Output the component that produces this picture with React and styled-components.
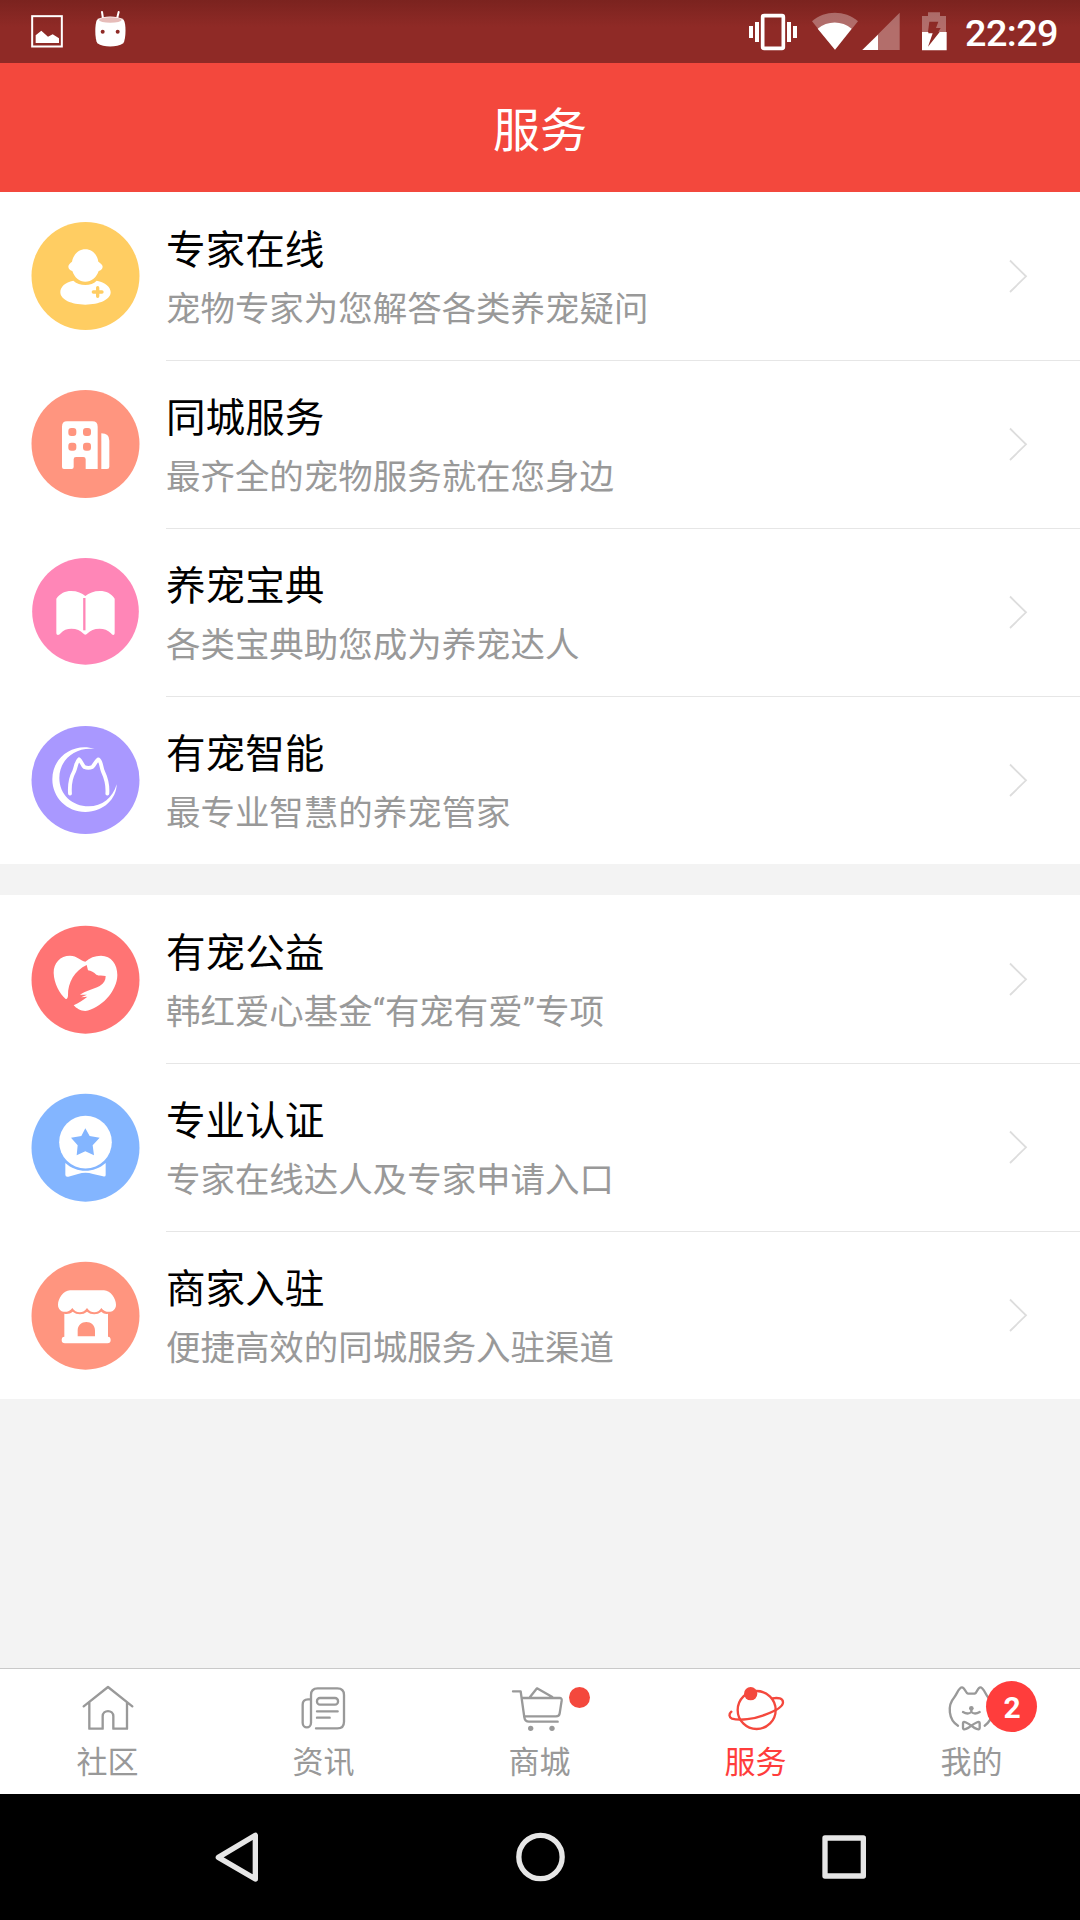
import styled, { createGlobalStyle, css } from "styled-components";

// Styled Components
const GlobalStyle = createGlobalStyle`
  * {
    box-sizing: border-box;
  }
  body {
    margin: 0;
    background: #f3f3f3;
    font-family: Roboto, "Noto Sans CJK SC", sans-serif;
  }
  svg {
    display: block;
    flex-shrink: 0;
  }
`;

const Screen = styled.div`
  display: flex;
  flex-direction: column;
  width: 1080px;
  height: 1920px;
  overflow: hidden;
  background: #f3f3f3;
`;

const StatusBar = styled.div`
  display: flex;
  justify-content: space-between;
  height: 63px;
  padding-left: 31px;
  background: linear-gradient(#7b231f 0, #8f2a26 27px);
  color: #fff;
`;

const StatusGroup = styled.div`
  display: flex;
  width: ${(props) => props.$width || "auto"};
`;

const StatusIcon = styled.svg`
  height: 63px;
  width: ${(props) => props.$width}px;
  margin-left: ${(props) => props.$gap || 0}px;
`;

const Clock = styled.span`
  margin-left: 17px;
  font-size: 37.8px;
  font-weight: 500;
  letter-spacing: -0.6px;
  line-height: 66px;
`;

const Header = styled.header`
  display: flex;
  align-items: center;
  justify-content: center;
  height: 129px;
  padding-top: 6px;
  background: #f3483d;
`;

const HeaderTitle = styled.h1`
  margin: 0;
  color: #fff;
  font-size: 47px;
  font-weight: 400;
  line-height: 60px;
`;

const List = styled.ul`
  list-style: none;
  margin: 0 0 31px;
  padding: 0;
  background: #fff;
`;

const Row = styled.li`
  display: flex;
  align-items: center;
  height: 168px;
  padding-left: 31px;
`;

const RowIcon = styled.svg`
  width: 109px;
  height: 108px;
  overflow: visible;
`;

const RowBody = styled.div`
  display: flex;
  align-items: center;
  justify-content: space-between;
  flex: 1;
  height: 168px;
  margin-left: 26px;
  padding-right: 52px;
  border-top: 1px solid #e6e6e6;
  ${Row}:first-child & {
    border-top-color: transparent;
  }
`;

const RowInfo = styled.div`
  padding-top: 7px;
`;

const RowTitle = styled.div`
  color: #000;
  font-size: 39.6px;
  line-height: 58px;
`;

const RowText = styled.div`
  color: #999;
  font-size: 34.46px;
  line-height: 59px;
`;

const Arrow = styled.svg`
  width: 20px;
  height: 36px;
  fill: none;
  stroke: #ddd;
  stroke-width: 1.8;
`;

const TabBar = styled.nav`
  display: flex;
  height: 126px;
  margin-top: auto;
  border-top: 1px solid #c9c9c9;
  background: #fff;
`;

const Tab = styled.div`
  position: relative;
  display: flex;
  flex-direction: column;
  align-items: center;
  flex: 1;
  padding-top: 14px;
  color: ${(props) => (props.$active ? "#f4483d" : "#999")};
`;

const TabIcon = styled.svg`
  width: 60px;
  height: 51px;
  fill: none;
  stroke: currentColor;
  stroke-width: 7;
  stroke-linecap: round;
  stroke-linejoin: round;
`;

const TabLabel = styled.span`
  margin-top: 6px;
  padding-right: 1px;
  color: ${(props) => (props.$active ? "#ff3d3c" : "#999")};
  font-size: 31px;
  line-height: 46px;
`;

const Badge = styled.span`
  position: absolute;
  border-radius: 50%;
  ${(props) =>
    props.$dot
      ? css`
          top: 18px;
          left: 137px;
          width: 21px;
          height: 21px;
          background: #f4483d;
        `
      : css`
          top: 12px;
          left: 122px;
          width: 51px;
          height: 51px;
          background: #ff3d3c;
          color: #fff;
          font-size: 30px;
          font-weight: 700;
          line-height: 53px;
          text-align: center;
          text-indent: 1px;
        `}
`;

const NavBar = styled.div`
  display: flex;
  align-items: center;
  justify-content: center;
  gap: 243px;
  height: 126px;
  background: #000;
`;

const NavButton = styled.svg`
  width: 60px;
  height: 60px;
  fill: none;
  stroke: #e6e6e6;
  stroke-width: 16;
  stroke-linejoin: round;
`;

const services = [
  {
    title: "专家在线",
    text: "宠物专家为您解答各类养宠疑问",
    color: "#ffcd62",
    cy: 258,
    icon: (
      <>
        <path d="M256 178C276 178 292 193 295 215C300 218 308 224 308 230C308 236 302 241 296 243C290 262 274 275 256 275C238 275 223 262 217 243C211 241 205 236 205 230C205 224 211 218 216 215C220 193 236 178 256 178Z" />
        <path d="M220 272C230 281 242 285 256 285C270 285 281 281 290 272C316 277 332 291 332 307C332 329 298 344 256 344C214 344 181 329 181 307C181 290 195 277 220 272Z" />
        <path d="M293 293V319M280 306H306" stroke="#ffcd62" strokeWidth="10" strokeLinecap="round" />
      </>
    ),
  },
  {
    title: "同城服务",
    text: "最齐全的宠物服务就在您身边",
    color: "#ff957f",
    cy: 762,
    icon: (
      <>
        <path d="M201 694H277Q293 694 293 710V837H257V808Q257 801 250 801H228Q221 801 221 808V831Q221 837 215 837H192Q186 837 186 831V710Q186 694 201 694Z" />
        <path d="M304 730Q328 730 328 752V830Q328 837 321 837H304Z" />
        <g fill="#ff957f">
          <rect x="205" y="714" width="24" height="24" rx="9" />
          <rect x="249" y="714" width="24" height="24" rx="9" />
          <rect x="205" y="758" width="24" height="24" rx="9" />
          <rect x="249" y="758" width="24" height="24" rx="9" />
        </g>
      </>
    ),
  },
  {
    title: "养宠宝典",
    text: "各类宝典助您成为养宠达人",
    color: "#ff86b7",
    cy: 244,
    shift: 2,
    r: 160,
    icon: (
      <>
        <path d="M169 206C180 190 196 183 213 183C232 183 246 189 256 198C267 189 281 183 300 183C318 183 334 190 344 206V308C344 316 338 317 333 310C323 300 312 296 299 296C282 296 271 301 263 310Q256 318 249 310C242 301 230 296 214 296C201 296 190 300 182 310C176 317 169 316 169 308Z" />
        <path d="M253 204V301" stroke="#ff86b7" strokeWidth="7" />
      </>
    ),
  },
  {
    title: "有宠智能",
    text: "最专业智慧的养宠管家",
    color: "#a998ff",
    cy: 750,
    icon: (
      <>
        <path d="M284 657C228 636 157 676 157 748C157 803 201 846 256 846C312 846 350 805 350 763C338 805 306 829 266 829C217 829 178 794 178 744C178 690 224 650 284 657Z" />
        <path
          d="M210 791C208 764 212 743 222 725C228 712 228 696 237 688C244 693 246 705 253 711Q265 716 277 711C283 705 287 694 295 688C304 694 303 711 309 725C318 744 324 764 322 791"
          fill="none"
          stroke="#fff"
          strokeWidth="11.500"
          strokeLinecap="round"
          strokeLinejoin="round"
        />
      </>
    ),
  },
];

const partners = [
  {
    title: "有宠公益",
    text: "韩红爱心基金“有宠有爱”专项",
    color: "#ff7474",
    cy: 269,
    shift: -2,
    icon: (
      <path d="M256 215C269 203 284 197 303 197C334 197 352 223 352 255C352 305 300 357 256 363C242 363 229 355 221 346C236 338 249 331 262 320L243 322L261 314L240 314C255 303 279 298 299 288C311 281 317 272 317 258C307 256 297 258 289 254C282 247 273 242 264 241L260 225C225 241 203 277 204 317Q203 327 197 327C179 311 162 281 161 249C160 219 181 197 210 197C231 197 242 213 256 215Z" />
    ),
  },
  {
    title: "专业认证",
    text: "专家在线达人及专家申请入口",
    color: "#83b5ff",
    cy: 773,
    shift: -2,
    icon: (
      <>
        <path d="M196 819C230 850 282 850 317 819V855Q317 861 309 859L279 852C264 847 249 847 234 852L205 860Q196 862 196 854Z" />
        <circle cx="256.500" cy="756.500" r="79" />
        <path
          d="M256 715L269 738L299 743L278 766L282 796L256 784L230 796L233 766L213 743L244 738Z"
          fill="#83b5ff"
        />
      </>
    ),
  },
  {
    title: "商家入驻",
    text: "便捷高效的同城服务入驻渠道",
    color: "#ff957f",
    cy: 287,
    shift: -2,
    icon: (
      <>
        <path d="M210 211H312C332 211 348 237 348 254C348 278 318 283 304 264C295 281 271 281 261 264C251 281 227 281 217 264C203 283 174 278 174 254C174 237 190 211 210 211Z" />
        <path d="M193 281C202 283 211 281 218 275C231 285 249 285 261 275C273 285 292 285 304 275C311 281 317 283 324 281V350Q332 350 332 360Q332 370 322 370H195Q185 370 185 360Q185 350 193 350ZM233 349H285V332C285 316 273 306 259 306C245 306 233 316 233 332Z" fillRule="evenodd" />
      </>
    ),
  },
];

const tabs = [
  {
    label: "社区",
    x: 234,
    icon: (
      <path d="M251 169L324 111L397 169M268 157V236H308V199C308 178 340 178 340 199V236H381V157" />
    ),
  },
  {
    label: "资讯",
    x: 882,
    icon: (
      <>
        <path d="M948 235H1012Q1032 235 1032 215V135Q1032 115 1012 115H953Q933 115 933 135V218C933 237 908 237 908 218V164Q908 148 924 148H930" />
        <rect x="951" y="144" width="63" height="20" rx="9" />
        <path d="M951 184H1013M951 203H989" />
      </>
    ),
  },
  {
    label: "商城",
    x: 330,
    dot: true,
    icon: (
      <>
        <path d="M339 124H362L373 202Q375 215 387 215H473M366 144H479Q486 144 485 152L479 190Q478 199 468 199H374M390 141L411 115L457 141" />
        <circle cx="392" cy="235" r="8" fill="currentColor" stroke="none" />
        <circle cx="456" cy="235" r="8" fill="currentColor" stroke="none" />
      </>
    ),
  },
  {
    label: "服务",
    x: 978,
    active: true,
    icon: (
      <>
        <circle cx="1070" cy="180" r="57" />
        <circle cx="1052" cy="131" r="20" fill="currentColor" stroke="none" />
        <path d="M994 185C986 192 987 202 996 206C1019 213 1062 207 1096 194C1124 184 1149 171 1149 157C1149 145 1135 142 1117 145" />
      </>
    ),
  },
  {
    label: "我的",
    x: 486,
    count: 2,
    icon: (
      <>
        <path d="M534 227C505 209 502 166 522 143C532 131 536 112 546 112C555 112 556 130 564 131H584C592 129 592 112 601 112C611 112 615 132 625 143C644 166 642 208 614 227" />
        <path d="M549 186Q564 195 574 186Q584 195 599 186M574 178V186" />
        <circle cx="574" cy="175" r="7" fill="currentColor" stroke="none" />
        <path d="M549 219C549 211 565 220 574 227C583 220 599 211 599 219V234C599 243 583 235 574 227C565 235 549 243 549 234Z" />
      </>
    ),
  },
];

function ServiceRow({ item }) {
  const top = item.cy + (item.shift || 0) - 162;

  return (
    <Row>
      <RowIcon viewBox={`93 ${top} 327 324`} fill="#fff">
        <circle cx="256.500" cy={item.cy} r={item.r || 162} fill={item.color} />
        {item.icon}
      </RowIcon>
      <RowBody>
        <RowInfo>
          <RowTitle>{item.title}</RowTitle>
          <RowText>{item.text}</RowText>
        </RowInfo>
        <Arrow viewBox="0 0 20 36">
          <path d="M2 1.500L18 17.300L2 33" />
        </Arrow>
      </RowBody>
    </Row>
  );
}

function Status() {
  return (
    <StatusBar>
      <StatusGroup>
        <StatusIcon $width={33} viewBox="93 0 99 189">
          <rect x="96.500" y="48.500" width="89" height="91" fill="none" stroke="#fff" strokeWidth="6" />
          <path d="M107 129V106L124 92L144 110L158 103L177 115V129Z" fill="#fff" />
        </StatusIcon>
        <StatusIcon $width={33} $gap={30} viewBox="282 0 99 189">
          <path d="M306 36L309 56M356 36L351 56" stroke="#fff" strokeWidth="6" strokeLinecap="round" />
          <path d="M291 59C310 46 351 46 371 59C379 72 378 115 370 130C350 143 311 143 292 130C284 115 284 72 291 59Z" fill="#fff" />
          <ellipse cx="331" cy="60" rx="34" ry="8" fill="#e6bcb9" />
          <circle cx="308" cy="95" r="6" fill="#8f2a26" />
          <circle cx="353" cy="95" r="6" fill="#8f2a26" />
        </StatusIcon>
      </StatusGroup>
      <StatusGroup $width="332px">
        <StatusIcon $width={51} viewBox="84 0 153 189" fill="#fff">
          <rect x="128" y="47" width="62" height="98" rx="4" fill="none" stroke="#fff" strokeWidth="11" />
          <path d="M87 78H99V114H87ZM105 66H117V126H105ZM201 66H213V126H201ZM219 78H231V114H219Z" />
        </StatusIcon>
        <StatusIcon $width={48} $gap={12} viewBox="273 0 144 189" fill="#fff">
          <path d="M276 64C315 30 374 30 414 64L345 149Z" opacity="0.32" />
          <path d="M293 86C322 61 366 61 395 86L345 149Z" />
        </StatusIcon>
        <StatusIcon $width={39} $gap={3} viewBox="426 0 117 189" fill="#fff">
          <path d="M539 38V150H427Z" opacity="0.32" />
          <path d="M474 104V150H427Z" />
        </StatusIcon>
        <StatusIcon $width={27} $gap={20} viewBox="603 0 81 189" fill="#fff">
          <path d="M606 96V48H624V37H660V48H678V96H655L662 84H648L655 65H628L624 96Z" opacity="0.32" />
          <path d="M606 96H625V100H638L624 140L659 96H680V151H606Z" />
        </StatusIcon>
        <Clock>22:29</Clock>
      </StatusGroup>
    </StatusBar>
  );
}

function App() {
  return (
    <Screen>
      <GlobalStyle />
      <Status />
      <Header>
        <HeaderTitle>服务</HeaderTitle>
      </Header>
      <List>
        {services.map((item) => (
          <ServiceRow key={item.title} item={item} />
        ))}
      </List>
      <List>
        {partners.map((item) => (
          <ServiceRow key={item.title} item={item} />
        ))}
      </List>
      <TabBar>
        {tabs.map((tab) => (
          <Tab key={tab.label} $active={tab.active}>
            <TabIcon viewBox={`${tab.x} 99 180 153`}>{tab.icon}</TabIcon>
            <TabLabel $active={tab.active}>{tab.label}</TabLabel>
            {tab.dot && <Badge $dot />}
            {tab.count && <Badge>{tab.count}</Badge>}
          </Tab>
        ))}
      </TabBar>
      <NavBar>
        <NavButton viewBox="621 532 180 180">
          <path d="M655 623L766 557V688Z" />
        </NavButton>
        <NavButton viewBox="330 532 180 180">
          <circle cx="421.500" cy="622" r="65" />
        </NavButton>
        <NavButton viewBox="99 532 180 180">
          <rect x="135" y="565" width="115" height="114" />
        </NavButton>
      </NavBar>
    </Screen>
  );
}

export default App;
